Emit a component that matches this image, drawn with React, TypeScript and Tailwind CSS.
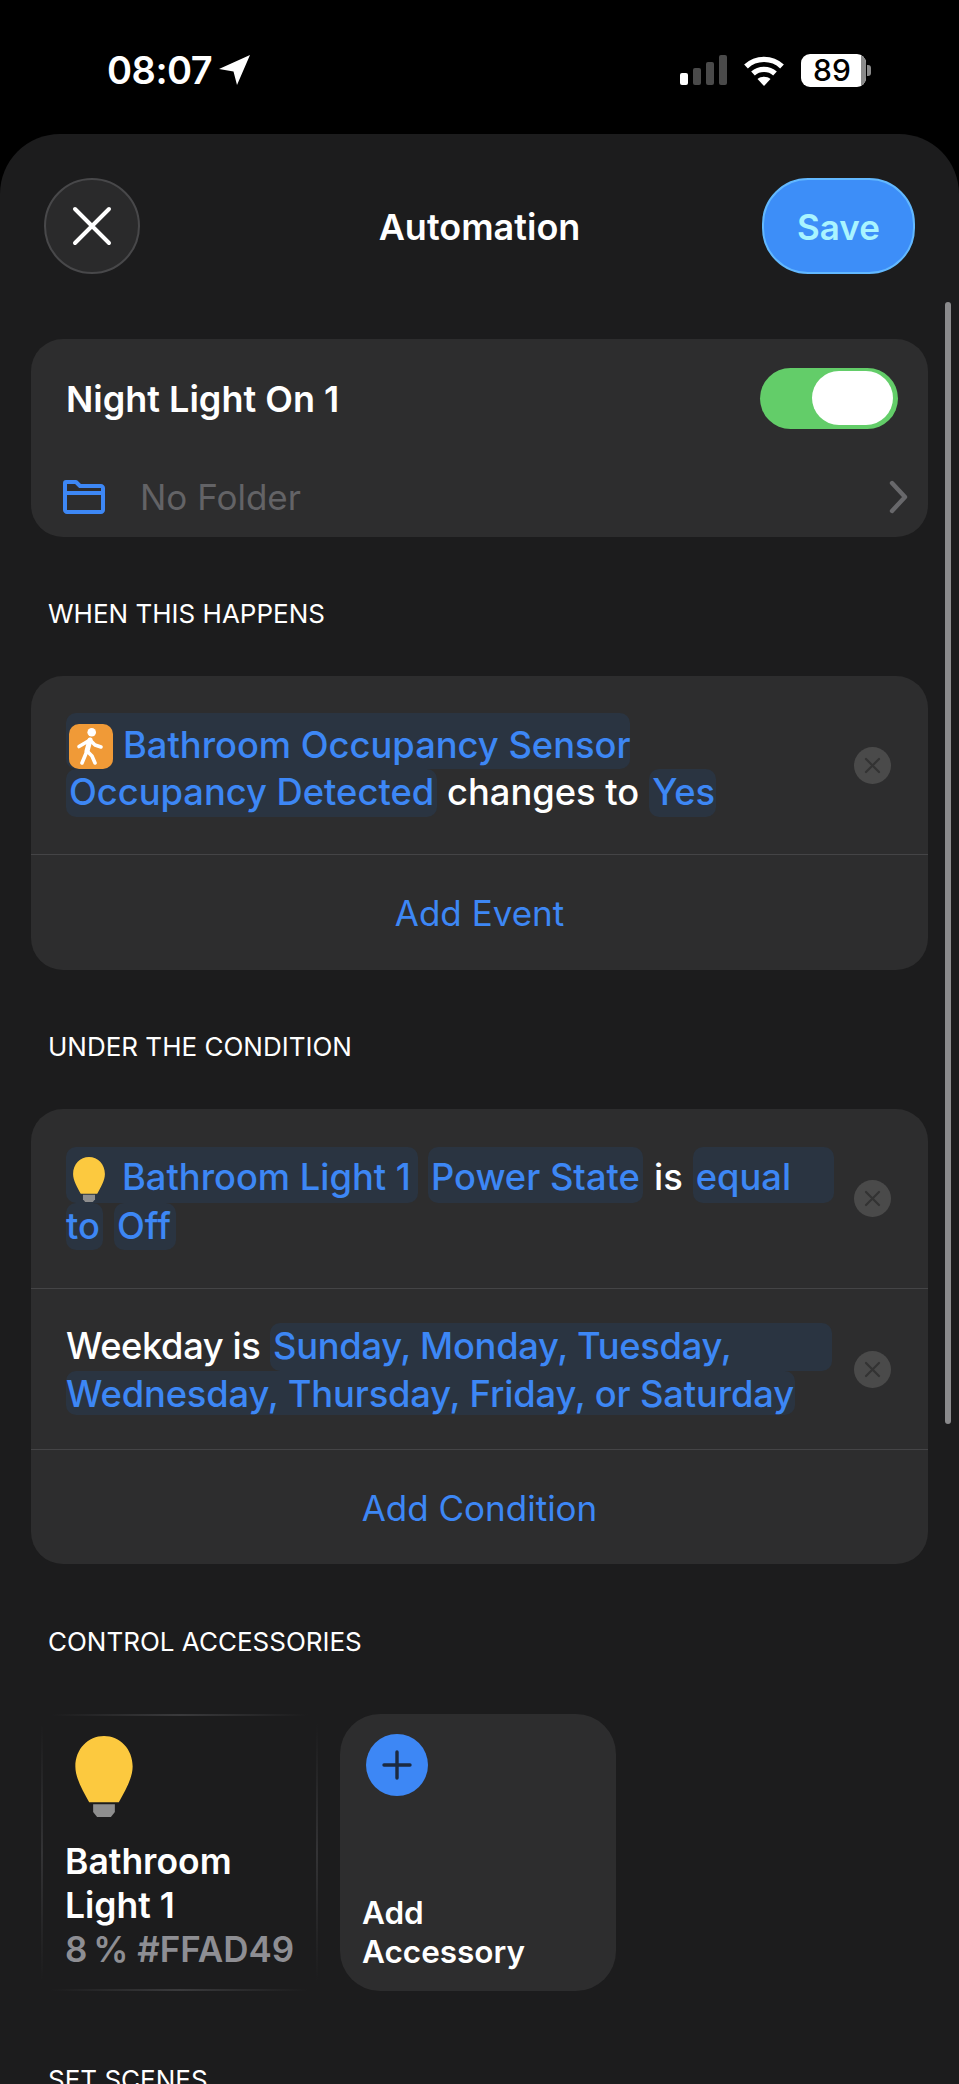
import type { ReactNode } from 'react';

const font = { fontFamily: 'Inter, "Noto Sans", sans-serif' };

function Chip({ children, className = '' }: { children: ReactNode; className?: string }) {
  return (
    <div className={`flex items-center rounded-[10px] bg-[#2a3441] px-[3px] text-[#3d87f5] ${className}`}>
      {children}
    </div>
  );
}

function RemoveButton() {
  return (
    <div className="mr-[37px] flex h-[37px] w-[37px] shrink-0 items-center justify-center rounded-full bg-[#4a4a4a]">
      <svg width="17" height="17" viewBox="0 0 17 17" fill="none" stroke="#333333" strokeWidth="2.2" strokeLinecap="round">
        <path d="M2 2L15 15M15 2L2 15" />
      </svg>
    </div>
  );
}

function SectionLabel({ children, className = '' }: { children: ReactNode; className?: string }) {
  return (
    <div className={`ml-[48px] h-[32px] text-[26px] leading-[34px] text-white ${className}`}>{children}</div>
  );
}

function Bulb({ className = '' }: { className?: string }) {
  return (
    <svg className={className} viewBox="0 0 58 82" fill="none">
      <path d="M29 0C13 0 0 13 0 31C0 43 8 56 14 67H44C50 56 58 43 58 31C58 13 45 0 29 0Z" fill="#fcc93f" />
      <path d="M18 69H40V77L36 82H22L18 77Z" fill="#8e8e8e" />
    </svg>
  );
}

function WalkingIcon() {
  return (
    <svg width="44" height="45" viewBox="0 0 44 45" fill="none" stroke="white" strokeWidth="3.6" strokeLinecap="round" strokeLinejoin="round">
      <circle cx="22.7" cy="8.3" r="4.3" fill="white" stroke="none" />
      <path d="M21 16L18 27" strokeWidth="5" />
      <path d="M21 16L10 22.5" />
      <path d="M21 16L26 21L32 23" />
      <path d="M18 27L13 39" />
      <path d="M18 27L23 32L26 39" />
    </svg>
  );
}

function StatusBar() {
  return (
    <div className="flex h-[134px] items-start justify-between pl-[107px] pr-[88px] pt-[53px] text-white">
      <div className="flex h-[34px] items-center gap-[7px]">
        <span className="text-[38px] font-semibold leading-none tracking-[-0.5px]">08:07</span>
        <svg width="32" height="30" viewBox="0 0 32 30" fill="white">
          <path d="M31 0L18 30L14.5 16.5L0 14Z" />
        </svg>
      </div>
      <div className="flex h-[34px] items-center">
        <div className="flex h-[30px] items-end gap-[5px]">
          <div className="h-[12px] w-[8px] rounded-[2px] bg-white" />
          <div className="h-[17px] w-[8px] rounded-[2px] bg-[#4a4a4a]" />
          <div className="h-[23px] w-[8px] rounded-[2px] bg-[#4a4a4a]" />
          <div className="h-[30px] w-[8px] rounded-[2px] bg-[#4a4a4a]" />
        </div>
        <svg className="ml-[16px]" width="42" height="31" viewBox="0 0 42 31" fill="none" stroke="white" strokeWidth="5.4">
          <path d="M3 11.5C13 2 29 2 39 11.5" />
          <path d="M10 18.5C16 13 26 13 32 18.5" />
          <path d="M21 31L14.5 24C18 21 24 21 27.5 24Z" fill="white" stroke="none" />
        </svg>
        <div className="ml-[16px] flex items-center">
          <div className="relative flex h-[33px] w-[65px] items-center justify-center overflow-hidden rounded-[9px] bg-white pr-[3px]">
            <span className="text-[30px] font-medium leading-none text-black">89</span>
            <div className="absolute bottom-0 right-0 top-0 w-[5px] bg-[#8a8a8a]" />
          </div>
          <div className="ml-[1px] h-[11px] w-[4px] rounded-r-[3px] bg-[#8a8a8a]" />
        </div>
      </div>
    </div>
  );
}

export default function App() {
  return (
    <div style={font} className="relative h-[2084px] w-[959px] overflow-hidden bg-black">
      <StatusBar />

      <div className="h-[1950px] rounded-t-[60px] bg-[#1c1c1d] pt-[44px]">
        {/* Header */}
        <div className="grid grid-cols-[1fr_auto_1fr] items-center px-[44px]">
          <div className="flex h-[96px] w-[96px] items-center justify-center rounded-full border-2 border-[#48484a] bg-[#2a2a2b]">
            <svg width="40" height="40" viewBox="0 0 40 40" fill="none" stroke="white" strokeWidth="4" strokeLinecap="round">
              <path d="M3 3L37 37M37 3L3 37" />
            </svg>
          </div>
          <div className="pt-[2px] text-[36px] font-semibold leading-none text-white">Automation</div>
          <div className="flex justify-end">
            <div className="flex h-[96px] w-[153px] items-center justify-center rounded-[46px] border-2 border-[#62b8ff] bg-[#3d8ef8] pt-[2px] text-[35px] font-semibold text-[#a9f4ff]">
              Save
            </div>
          </div>
        </div>

        {/* Name card */}
        <div className="mx-[31px] mt-[65px] h-[198px] rounded-[32px] bg-[#2d2d2e]">
          <div className="flex h-[118px] items-center justify-between pl-[35px] pr-[30px]">
            <div className="pt-[2px] text-[36px] font-semibold text-white">Night Light On 1</div>
            <div className="flex h-[61px] w-[138px] items-center justify-end rounded-full bg-[#63cd69] pr-[5px]">
              <div className="h-[54px] w-[81px] rounded-full bg-white" />
            </div>
          </div>
          <div className="flex h-[80px] items-center pl-[32px] pr-[20px]">
            <svg width="42" height="34" viewBox="0 0 42 34" fill="none" stroke="#3d87f5" strokeWidth="4" strokeLinejoin="round">
              <path d="M2 30V3C2 2.5 2.5 2 3 2H13L17 6H38C39 6 40 7 40 8V30C40 31 39 32 38 32H4C3 32 2 31 2 30Z" />
              <path d="M2 13H40" />
            </svg>
            <div className="ml-[35px] flex-1 text-[35px] text-[#636366]">No Folder</div>
            <svg width="19" height="34" viewBox="0 0 19 34" fill="none" stroke="#68686b" strokeWidth="4.4" strokeLinecap="round" strokeLinejoin="round">
              <path d="M3 3L16 17L3 31" />
            </svg>
          </div>
        </div>

        <SectionLabel className="mt-[60px]">WHEN THIS HAPPENS</SectionLabel>

        {/* Events */}
        <div className="mx-[31px] mt-[47px] rounded-[32px] bg-[#2d2d2e]">
          <div className="flex h-[179px] items-center justify-between border-b border-[#444446] pl-[35px]">
            <div className="text-[36.3px] font-medium leading-none">
              <Chip className="h-[56px] w-[564px] !items-end">
                <div className="mr-[10px] h-[45px] w-[44px] shrink-0 rounded-[10px] bg-[#f09a37]">
                  <WalkingIcon />
                </div>
                <span className="whitespace-nowrap pb-[6px]">Bathroom Occupancy Sensor</span>
              </Chip>
              <div className="flex h-[48px] items-center">
                <Chip className="h-[48px] w-[371px] whitespace-nowrap pb-[2px]">Occupancy Detected</Chip>
                <span className="mb-[2px] ml-[10px] whitespace-nowrap text-white">changes to</span>
                <Chip className="ml-[10px] h-[48px] w-[67px] pb-[2px]">Yes</Chip>
              </div>
            </div>
            <RemoveButton />
          </div>
          <div className="flex h-[115px] items-center justify-center pt-[2px] text-[35px] text-[#3d87f5]">Add Event</div>
        </div>

        <SectionLabel className="mt-[60px]">UNDER THE CONDITION</SectionLabel>

        {/* Conditions */}
        <div className="mx-[31px] mt-[47px] rounded-[32px] bg-[#2d2d2e]">
          <div className="flex h-[180px] items-center justify-between border-b border-[#444446] pl-[35px]">
            <div className="text-[36.3px] font-medium leading-none">
              <div className="flex h-[56px] items-center">
                <Chip className="h-[56px] w-[352px] whitespace-nowrap pt-[5px]">
                  <Bulb className="ml-[4px] mr-[17px] mt-[4px] h-[45px] w-[32px] shrink-0" />
                  Bathroom Light 1
                </Chip>
                <Chip className="ml-[10px] h-[56px] w-[215px] whitespace-nowrap pt-[5px]">Power State</Chip>
                <span className="ml-[11px] pt-[5px] text-white">is</span>
                <Chip className="ml-[10px] h-[56px] w-[141px] pt-[5px]">equal</Chip>
              </div>
              <div className="flex h-[47px] items-center">
                <Chip className="h-[47px] w-[37px] !px-0">to</Chip>
                <Chip className="ml-[11px] h-[47px] w-[62px]">Off</Chip>
              </div>
            </div>
            <RemoveButton />
          </div>
          <div className="flex h-[161px] items-center justify-between border-b border-[#444446] pl-[35px]">
            <div className="text-[36.3px] font-medium leading-none">
              <div className="flex h-[48px] items-center">
                <span className="mb-[1px] w-[194px] whitespace-nowrap tracking-[-0.4px] text-white">Weekday is</span>
                <Chip className="ml-[10px] h-[48px] w-[562px] whitespace-nowrap pb-[1px] tracking-[-0.27px]">Sunday, Monday, Tuesday,</Chip>
              </div>
              <Chip className="h-[44px] w-[729px] whitespace-nowrap !px-0 pt-[2px] tracking-[-0.13px]">Wednesday, Thursday, Friday, or Saturday</Chip>
            </div>
            <RemoveButton />
          </div>
          <div className="flex h-[114px] items-center justify-center pt-[2px] text-[35px] text-[#3d87f5]">Add Condition</div>
        </div>

        <SectionLabel className="mt-[61px]">CONTROL ACCESSORIES</SectionLabel>

        {/* Accessories */}
        <div className="ml-[41px] mt-[57px] flex gap-[22px]">
          <div className="relative flex h-[277px] w-[277px] flex-col pl-[24px] pt-[22px]">
            {/* edge highlights fade out at the corners */}
            <div className="absolute left-[10px] right-[10px] top-0 h-[2px] bg-gradient-to-r from-transparent via-[#3a3a3c] to-transparent" />
            <div className="absolute bottom-0 left-[10px] right-[10px] h-[2px] bg-gradient-to-r from-transparent via-[#3a3a3c] to-transparent" />
            <div className="absolute bottom-[10px] left-0 top-[10px] w-[2px] bg-gradient-to-b from-transparent via-[#333335] to-transparent" />
            <div className="absolute bottom-[10px] right-0 top-[10px] w-[2px] bg-gradient-to-b from-transparent via-[#333335] to-transparent" />
            <Bulb className="ml-[10px] h-[81px] w-[58px]" />
            <div className="mt-[23px] text-[35.5px] font-semibold leading-[44px] text-white">
              Bathroom
              <br />
              Light 1
            </div>
            <div className="whitespace-nowrap text-[35px] font-semibold leading-[42px] text-[#8e8e93]">8{'\u2009'}% #FFAD49</div>
          </div>
          <div className="flex h-[277px] w-[276px] flex-col justify-between rounded-[40px] bg-[#2d2d2e] pb-[20px] pl-[22px] pt-[20px]">
            <div className="ml-[4px] flex h-[62px] w-[62px] items-center justify-center rounded-full bg-[#3d87f5]">
              <svg width="30" height="30" viewBox="0 0 30 30" fill="none" stroke="#1c2a40" strokeWidth="3.4" strokeLinecap="round">
                <path d="M15 2V28M2 15H28" />
              </svg>
            </div>
            <div className="text-[31.5px] font-semibold leading-[39px] text-white">
              Add
              <br />
              Accessory
            </div>
          </div>
        </div>

        <SectionLabel className="mt-[72px]">SET SCENES</SectionLabel>
      </div>

      {/* Scroll indicator */}
      <div className="absolute left-[945px] top-[302px] h-[1122px] w-[6px] rounded-full bg-[#8a8a8c]" />
    </div>
  );
}
